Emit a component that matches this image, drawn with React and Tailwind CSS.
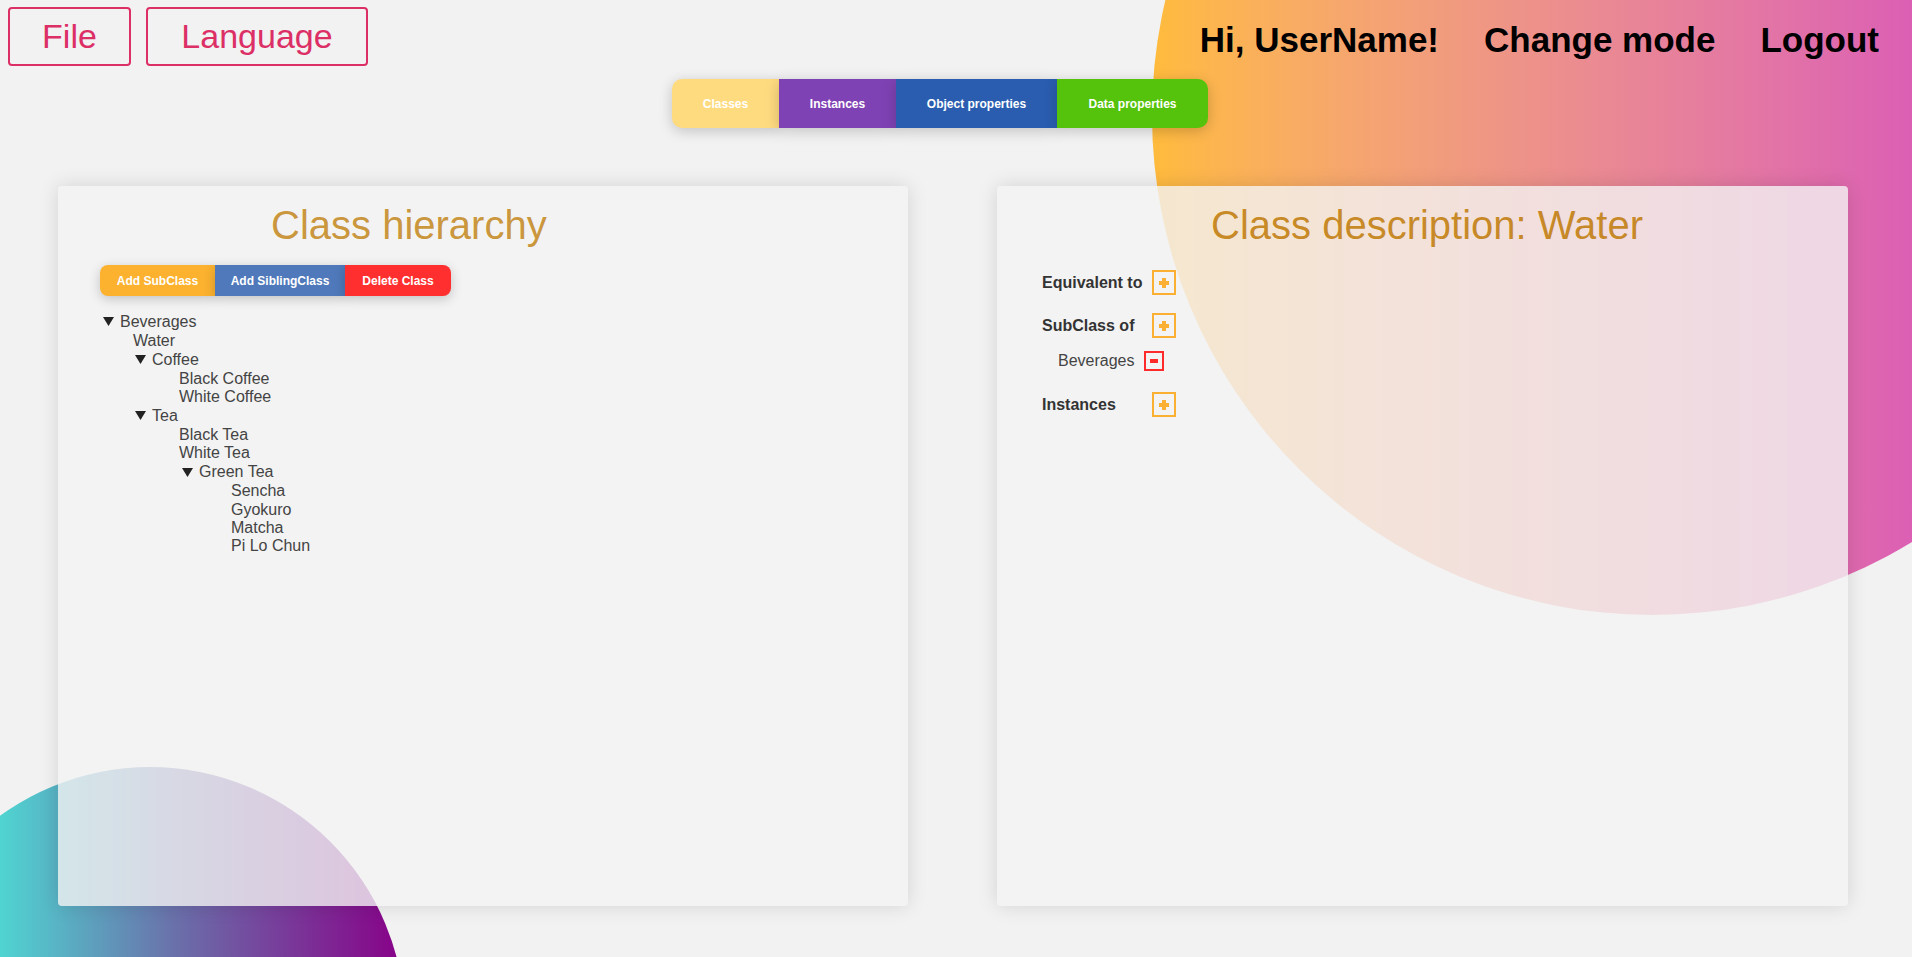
import React from 'react';

const tabs = [
  { label: 'Classes', cls: 'w-[107px] bg-[#ffdb80] rounded-l-[10px]' },
  { label: 'Instances', cls: 'w-[117px] bg-[#7f42b4]' },
  { label: 'Object properties', cls: 'w-[161px] bg-[#2a5db0]' },
  { label: 'Data properties', cls: 'w-[151px] bg-[#55c20b] rounded-r-[10px]' },
];

// pad = left offset inside the panel, open = has the ▼ toggle
const tree = [
  { name: 'Beverages', pad: 'pl-[45px]', open: true },
  { name: 'Water', pad: 'pl-[75px]' },
  { name: 'Coffee', pad: 'pl-[77px]', open: true },
  { name: 'Black Coffee', pad: 'pl-[121px]' },
  { name: 'White Coffee', pad: 'pl-[121px]' },
  { name: 'Tea', pad: 'pl-[77px]', open: true },
  { name: 'Black Tea', pad: 'pl-[121px]' },
  { name: 'White Tea', pad: 'pl-[121px]' },
  { name: 'Green Tea', pad: 'pl-[124px]', open: true },
  { name: 'Sencha', pad: 'pl-[173px]' },
  { name: 'Gyokuro', pad: 'pl-[173px]' },
  { name: 'Matcha', pad: 'pl-[173px]' },
  { name: 'Pi Lo Chun', pad: 'pl-[173px]' },
];

const Triangle = () => (
  <svg width="11" height="9" viewBox="0 0 11 9" className="mr-[6px] shrink-0">
    <path d="M0 0 H11 L5.5 9 Z" fill="#222" />
  </svg>
);

const PlusBox = () => (
  <button className="flex h-[25px] w-[24px] items-center justify-center border-2 border-[#fbb034] bg-transparent">
    <svg width="10" height="10" viewBox="0 0 10 10">
      <rect x="0" y="3" width="10" height="4" fill="#fbb034" />
      <rect x="3" y="0" width="4" height="10" fill="#fbb034" />
    </svg>
  </button>
);

const MinusBox = () => (
  <button className="flex h-[20px] w-[20px] items-center justify-center border-2 border-[#ff2b2b] bg-transparent">
    <svg width="8" height="4" viewBox="0 0 8 4">
      <rect x="0" y="0" width="8" height="4" fill="#ff2b2b" />
    </svg>
  </button>
);

const App = () => {
  return (
    <div className="relative h-[957px] w-full overflow-hidden bg-[#f2f2f2] font-['Liberation_Sans',Arial,sans-serif]">
      {/* background blobs */}
      <div className="absolute left-[1152px] top-[-385px] h-[1000px] w-[1000px] rounded-full bg-gradient-to-r from-[#ffbb3c] to-[#d12ec8]" />
      <div className="absolute left-[-105px] top-[767px] h-[510px] w-[510px] rounded-full bg-[linear-gradient(to_right,#4fd6d2_20%,#6a70aa_55%,#880088_100%)]" />

      <div className="relative">
        {/* Header */}
        <div className="flex h-[66px] items-start justify-between">
          <div className="flex gap-[15px] pl-[8px] pt-[7px]">
            <button className="flex h-[59px] w-[123px] items-center justify-center rounded-[4px] border-2 border-[#dc2f66] text-[34px] leading-[39px] text-[#dc2f66]">
              File
            </button>
            <button className="flex h-[59px] w-[222px] items-center justify-center rounded-[4px] border-2 border-[#dc2f66] text-[34px] leading-[39px] text-[#dc2f66]">
              Language
            </button>
          </div>
          <div className="flex gap-[45px] pr-[33px] pt-[20px] text-[35px] font-bold leading-[39px] text-black">
            <span>Hi, UserName!</span>
            <span>Change mode</span>
            <span>Logout</span>
          </div>
        </div>

        {/* Tabs */}
        <div className="ml-[672px] mt-[13px] flex w-fit">
          {tabs.map((t) => (
            <button
              key={t.label}
              className={`flex h-[49px] items-center justify-center text-[12px] font-bold leading-[14px] text-white shadow-[0_3px_14px_rgba(0,0,0,0.2)] ${t.cls}`}
            >
              {t.label}
            </button>
          ))}
        </div>

        {/* Panels */}
        <div className="mt-[58px] flex gap-[89px] pl-[58px]">
          {/* Class hierarchy */}
          <div className="h-[720px] w-[850px] rounded-[4px] bg-[#f2f2f2]/80 shadow-[0_0_20px_rgba(0,0,0,0.13)]">
            <h2 className="pl-[213px] pt-[16px] text-[40px] leading-[46px] text-[#bf7e0b]/80">Class hierarchy</h2>
            <div className="ml-[42px] mt-[17px] flex">
              <button className="flex h-[31px] w-[115px] items-center justify-center rounded-l-[8px] bg-[#fcb22f] text-[12px] font-bold leading-[14px] text-white shadow-[0_3px_12px_rgba(0,0,0,0.2)]">
                Add SubClass
              </button>
              <button className="flex h-[31px] w-[130px] items-center justify-center bg-[#4f79bb] text-[12px] font-bold leading-[14px] text-white shadow-[0_3px_12px_rgba(0,0,0,0.2)]">
                Add SiblingClass
              </button>
              <button className="flex h-[31px] w-[106px] items-center justify-center rounded-r-[8px] bg-[#ff2f2f] text-[12px] font-bold leading-[14px] text-white shadow-[0_3px_12px_rgba(0,0,0,0.2)]">
                Delete Class
              </button>
            </div>
            <ul className="mt-[16px] text-[16px] leading-[18px] text-[#444]">
              {tree.map((n) => (
                <li key={n.name} className={`flex items-center ${n.open ? 'h-[19.5px]' : 'h-[18.4px]'} ${n.pad}`}>
                  {n.open && <Triangle />}
                  <span>{n.name}</span>
                </li>
              ))}
            </ul>
          </div>

          {/* Class description */}
          <div className="h-[720px] w-[851px] rounded-[4px] bg-[#f2f2f2]/80 shadow-[0_0_20px_rgba(0,0,0,0.13)]">
            <h2 className="pl-[214px] pt-[16px] text-[40px] leading-[46px] text-[#c07a06]/85">Class description: Water</h2>
            <div className="mt-[22px] pl-[45px] text-[16px] leading-[18px] text-[#333]">
              <div className="flex items-center">
                <span className="w-[110px] font-bold">Equivalent to</span>
                <PlusBox />
              </div>
              <div className="mt-[18px] flex items-center">
                <span className="w-[110px] font-bold">SubClass of</span>
                <PlusBox />
              </div>
              <div className="mt-[13px] flex items-center pl-[16px]">
                <span className="mr-[9px] text-[#444]">Beverages</span>
                <MinusBox />
              </div>
              <div className="mt-[21px] flex items-center">
                <span className="w-[110px] font-bold">Instances</span>
                <PlusBox />
              </div>
            </div>
          </div>
        </div>
      </div>
    </div>
  );
};

export default App;
